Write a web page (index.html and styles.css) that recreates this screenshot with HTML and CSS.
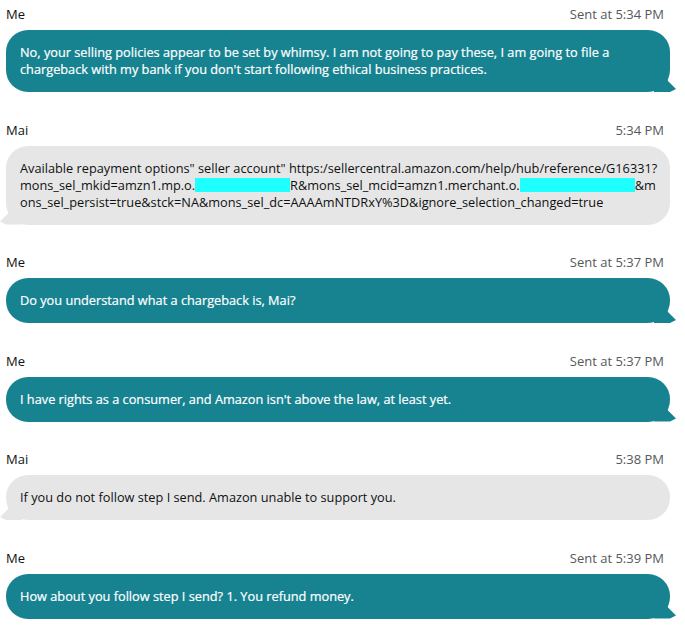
FILE: index.html
```html
<!DOCTYPE html>
<html lang="en">
<head>
<meta charset="utf-8">
<title>Messages</title>
<link rel="stylesheet" href="styles.css">
</head>
<body>
<div class="chat">
  <div class="msg me">
    <div class="meta"><span class="who">Me</span><span class="time">Sent at 5:34 PM</span></div>
    <div class="bubble">No, your selling policies appear to be set by whimsy. I am not going to pay these, I am going to file a<br>chargeback with my bank if you don't start following ethical business practices.</div>
  </div>
  <div class="msg them">
    <div class="meta"><span class="who">Mai</span><span class="time">5:34 PM</span></div>
    <div class="bubble">Available repayment options" seller account" https:/sellercentral.amazon.com/help/hub/reference/G16331?<br>mons_sel_mkid=amzn1.mp.o.<span class="redact r1"></span>R&amp;mons_sel_mcid=amzn1.merchant.o.<span class="redact r2"></span>&amp;m<br>ons_sel_persist=true&amp;stck=NA&amp;mons_sel_dc=AAAAmNTDRxY%3D&amp;ignore_selection_changed=true</div>
  </div>
  <div class="msg me">
    <div class="meta"><span class="who">Me</span><span class="time">Sent at 5:37 PM</span></div>
    <div class="bubble">Do you understand what a chargeback is, Mai?</div>
  </div>
  <div class="msg me">
    <div class="meta"><span class="who">Me</span><span class="time">Sent at 5:37 PM</span></div>
    <div class="bubble">I have rights as a consumer, and Amazon isn't above the law, at least yet.</div>
  </div>
  <div class="msg them">
    <div class="meta"><span class="who">Mai</span><span class="time">5:38 PM</span></div>
    <div class="bubble">If you do not follow step I send. Amazon unable to support you.</div>
  </div>
  <div class="msg me">
    <div class="meta"><span class="who">Me</span><span class="time">Sent at 5:39 PM</span></div>
    <div class="bubble">How about you follow step I send? 1. You refund money.</div>
  </div>
</div>
</body>
</html>
```
FILE: styles.css
```css
html, body {
  margin: 0;
  padding: 0;
  background: #ffffff;
}
body {
  font-family: "Open Sans", "Liberation Sans", sans-serif;
  font-size: 12.75px;
  color: #0f1111;
}
.chat {
  padding: 6px 15px 0 6px;
  display: flex;
  flex-direction: column;
  gap: 29.5px;
}
.msg {
  display: flex;
  flex-direction: column;
  gap: 8px;
}
.meta {
  display: flex;
  justify-content: space-between;
  line-height: 16px;
  font-size: 13px;
  padding-right: 6px;
}
.who {
  color: #0f1111;
}
.time {
  color: #565959;
}
.bubble {
  position: relative;
  padding: 14px 14px;
  line-height: 17px;
  border-radius: 22px;
  white-space: nowrap;
}
.me .bubble {
  background: #178391;
  color: #ffffff;
  -webkit-text-stroke: 0.2px #ffffff;
}
.them .bubble {
  background: #e6e6e6;
  color: #0f1111;
}
.bubble::after {
  content: "";
  position: absolute;
  bottom: 0;
  width: 22px;
  height: 16px;
  background: inherit;
}
.me .bubble::after {
  right: -6px;
  clip-path: polygon(0 16px, 0 0, 12px 0, 14px 5px, 22px 13px, 16px 16px);
}
.them .bubble::after {
  left: -6px;
  clip-path: polygon(22px 16px, 22px 0, 10px 0, 8px 5px, 0 13px, 6px 16px);
}
.redact {
  display: inline-block;
  height: 14px;
  vertical-align: -2px;
  background: #1effff;
}
.r1 {
  width: 95px;
}
.r2 {
  width: 115px;
}
```
